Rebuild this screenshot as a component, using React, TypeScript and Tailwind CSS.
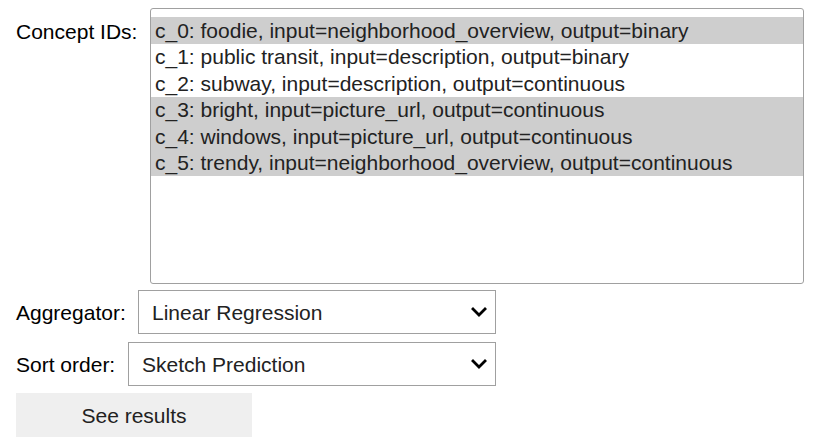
import { useState } from "react";

interface Concept {
  id: string;
  label: string;
}

const CONCEPTS: Concept[] = [
  { id: "c_0", label: "c_0: foodie, input=neighborhood_overview, output=binary" },
  { id: "c_1", label: "c_1: public transit, input=description, output=binary" },
  { id: "c_2", label: "c_2: subway, input=description, output=continuous" },
  { id: "c_3", label: "c_3: bright, input=picture_url, output=continuous" },
  { id: "c_4", label: "c_4: windows, input=picture_url, output=continuous" },
  { id: "c_5", label: "c_5: trendy, input=neighborhood_overview, output=continuous" },
];

const Chevron = () => (
  <svg width="16" height="10" viewBox="0 0 16 10" className="shrink-0">
    <path
      d="M2 2 L8 8 L14 2"
      fill="none"
      stroke="#000"
      strokeWidth="2.8"
      strokeLinecap="square"
    />
  </svg>
);

const FakeSelect: React.FC<{ value: string; className: string }> = ({
  value,
  className,
}) => (
  <div
    className={`h-[44px] flex items-center justify-between border border-[#a0a0a0] bg-white pl-[13px] pr-[8px] text-[#222] ${className}`}
  >
    <span>{value}</span>
    <Chevron />
  </div>
);

const App: React.FC = () => {
  const [selected, setSelected] = useState<Record<string, boolean>>({
    c_0: true,
    c_3: true,
    c_4: true,
    c_5: true,
  });

  const toggle = (id: string) =>
    setSelected((prev) => ({ ...prev, [id]: !prev[id] }));

  return (
    <div
      className="pl-4 pt-2 text-[21px] leading-none text-black bg-white min-h-[437px]"
      style={{ fontFamily: '"Liberation Sans", Arial, sans-serif' }}
    >
      <div className="flex items-start">
        <div className="w-[134px] pt-[13px]">Concept IDs:</div>
        <div className="w-[654px] h-[276px] border border-[#a0a0a0] rounded-[3px] pt-[8px] bg-white">
          {CONCEPTS.map((c) => (
            <div
              key={c.id}
              onClick={() => toggle(c.id)}
              className={`h-[26.5px] flex items-center pl-[4px] text-[#222] cursor-default ${
                selected[c.id] ? "bg-[#cecece]" : ""
              }`}
            >
              {c.label}
            </div>
          ))}
        </div>
      </div>

      <div className="flex items-center mt-[6px]">
        <div className="w-[122px]">Aggregator:</div>
        <FakeSelect value="Linear Regression" className="w-[358px]" />
      </div>

      <div className="flex items-center mt-[8px]">
        <div className="w-[112px]">Sort order:</div>
        <FakeSelect value="Sketch Prediction" className="w-[368px]" />
      </div>

      <button className="mt-[7px] w-[236px] h-[45px] bg-[#efefef] text-[#222] text-[21px]">
        See results
      </button>
    </div>
  );
};

export default App;
